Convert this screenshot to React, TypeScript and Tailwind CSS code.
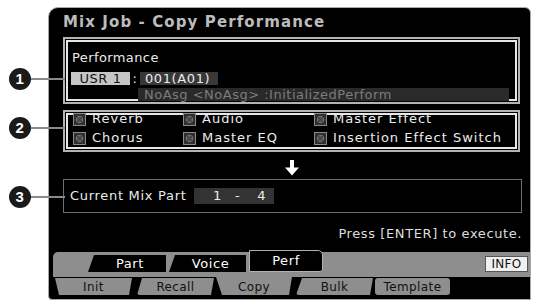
import React from "react";

function Check() {
  return (
    <svg width="13" height="13" viewBox="0 0 13 13" className="shrink-0">
      <rect x="0.5" y="0.5" width="12" height="12" fill="#303030" stroke="#8a8a8a" />
      <circle cx="6.5" cy="6.5" r="3.2" fill="#555" stroke="#7a7a7a" strokeWidth="1" />
      <path d="M4 4 L9 9 M9 4 L4 9" stroke="#3a3a3a" strokeWidth="1" />
    </svg>
  );
}

function CheckItem({ label, w }: { label: string; w: string }) {
  return (
    <div className={`flex items-center gap-[6px] ${w}`}>
      <Check />
      <span className="tracking-[1px]">{label}</span>
    </div>
  );
}

function Callout({ n, top }: { n: string; top: string }) {
  return (
    <div className={`absolute left-[9px] ${top} flex items-center`}>
      <div className="w-[22px] h-[22px] rounded-full bg-[#1a1a1a] text-white flex items-center justify-center text-[15px] font-bold font-['Liberation_Sans',sans-serif]">
        {n}
      </div>
      <div className="w-[34px] h-[2px] bg-[#8a8a8a]" />
    </div>
  );
}

export default function App() {
  return (
    <div className="relative w-[537px] h-[304px] bg-white overflow-hidden font-['DejaVu_Sans',sans-serif] text-[13px] tracking-[0.6px] text-[#ececec]">
      <div className="ml-[48px] pt-[7px]">
        <div className="w-[483px] h-[293px] border border-[#a8a8a8] rounded-tl-[10px] rounded-tr-[6px] rounded-bl-[4px] bg-black flex flex-col">
          {/* title */}
          <div className="h-[29px] pl-[14px] flex items-center text-[15px] font-bold text-[#bcbcbc] tracking-[1.1px]">
            Mix Job - Copy Performance
          </div>
          {/* box 1 */}
          <div className="ml-[14px] w-[457px] h-[67px] border-2 border-[#b4b4b4] shadow-[inset_0_0_0_1px_#000,inset_0_0_0_3px_#e6e6e6] px-[6px] pt-[12px] flex flex-col">
            <div className="h-[14px] flex items-center pl-[1px] tracking-[0.4px]">Performance</div>
            <div className="mt-[7px] h-[13px] flex items-center">
              <div className="w-[59px] h-[13px] bg-[#c6c6c6] text-[#111] flex items-center justify-center">USR 1</div>
              <div className="w-[10px] text-center">:</div>
              <div className="w-[78px] h-[13px] bg-[#383838] flex items-center pl-[5px]">001(A01)</div>
            </div>
            <div className="mt-[3px] ml-[67px] w-[371px] h-[13px] bg-[#2a2a2a] text-[#7c7c7c] flex items-center pl-[6px] tracking-[0.5px]">
              NoAsg &lt;NoAsg&gt; :InitializedPerform
            </div>
          </div>
          {/* box 2 */}
          <div className="mt-[6px] ml-[14px] w-[457px] h-[42px] border-2 border-[#b4b4b4] shadow-[inset_0_0_0_1px_#000,inset_0_0_0_3px_#e6e6e6] pl-[8px] flex flex-col pt-[1px] gap-[7px]">
            <div className="flex h-[12px] items-center">
              <CheckItem label="Reverb" w="w-[110px]" />
              <CheckItem label="Audio" w="w-[131px]" />
              <CheckItem label="Master Effect" w="w-[190px]" />
            </div>
            <div className="flex h-[12px] items-center">
              <CheckItem label="Chorus" w="w-[110px]" />
              <CheckItem label="Master EQ" w="w-[131px]" />
              <CheckItem label="Insertion Effect Switch" w="w-[200px]" />
            </div>
          </div>
          {/* arrow */}
          <div className="h-[27px] flex items-center justify-center pl-[4px] pt-[4px]">
            <svg width="14" height="16" viewBox="0 0 14 16">
              <path d="M5 0 H9 V7.5 H14 L7 15.5 L0 7.5 H5 Z" fill="#fff" />
            </svg>
          </div>
          {/* box 3 */}
          <div className="ml-[14px] w-[459px] h-[34px] border border-[#6e6e6e] flex items-center pl-[6px]">
            <span className="w-[124px] tracking-[0.7px]">Current Mix Part</span>
            <div className="w-[80px] h-[16px] bg-[#333] flex items-center">
              <span className="ml-[19px]">1</span>
              <span className="ml-[13px]">-</span>
              <span className="ml-[17px]">4</span>
            </div>
          </div>
          {/* press */}
          <div className="h-[35px] flex items-end justify-end pr-[8px] pb-[5px] text-[#dedede]">
            Press [ENTER] to execute.
          </div>
          {/* tabs */}
          <div className="h-[50px] pl-[4px] flex flex-col">
            <div className="mt-[4px] h-[25px] bg-[#8e8e8e] rounded-tl-[5px] flex">
              <div className="w-[35px]" />
              <div className="mt-[3px] w-[78px] h-[17px] bg-black text-white flex items-center justify-center pl-[6px] [clip-path:polygon(6px_0,100%_0,100%_100%,0_100%)]">
                Part
              </div>
              <div className="w-[3px]" />
              <div className="mt-[3px] w-[77px] h-[17px] bg-black text-white flex items-center justify-center pl-[6px] [clip-path:polygon(6px_0,100%_0,100%_100%,0_100%)]">
                Voice
              </div>
              <div className="w-[3px]" />
              <div className="-mt-[2px] w-[74px] h-[22px] bg-black text-white border border-[#b0b0b0] rounded-tr-[5px] rounded-br-[3px] flex items-center justify-center">
                Perf
              </div>
              <div className="flex-1 flex justify-end items-start pr-[2px]">
                <div className="mt-[4px] w-[43px] h-[16px] bg-[#f0f0f0] border border-[#555] text-[#111] text-[12px] tracking-[0.3px] flex items-center justify-center">
                  INFO
                </div>
              </div>
            </div>
            <div className="flex text-[#111] text-[12px] tracking-[0.4px]">
              <div className="ml-[2px] mt-[1px] w-[77px] h-[17px] bg-[#8e8e8e] rounded-b-[3px] flex items-center justify-center [clip-path:polygon(0_0,100%_0,calc(100%-3px)_100%,4px_100%)]">Init</div>
              <div className="w-[5px]" />
              <div className="mt-[1px] w-[77px] h-[17px] bg-[#8e8e8e] rounded-b-[3px] flex items-center justify-center [clip-path:polygon(5px_0,100%_0,calc(100%-3px)_100%,0_100%)]">Recall</div>
              <div className="w-[2px]" />
              <div className="w-[76px] h-[18px] bg-[#8e8e8e] rounded-b-[3px] flex items-center justify-center pt-[1px] [clip-path:polygon(0_0,100%_0,calc(100%-3px)_100%,6px_100%)]">Copy</div>
              <div className="w-[4px]" />
              <div className="mt-[1px] w-[77px] h-[17px] bg-[#8e8e8e] rounded-b-[3px] flex items-center justify-center [clip-path:polygon(6px_0,100%_0,calc(100%-3px)_100%,0_100%)]">Bulk</div>
              <div className="w-[2px]" />
              <div className="mt-[1px] w-[75px] h-[17px] bg-[#8e8e8e] rounded-[3px] flex items-center justify-center">Template</div>
            </div>
          </div>
        </div>
      </div>
      <Callout n="1" top="top-[68px]" />
      <Callout n="2" top="top-[117px]" />
      <Callout n="3" top="top-[186px]" />
    </div>
  );
}
